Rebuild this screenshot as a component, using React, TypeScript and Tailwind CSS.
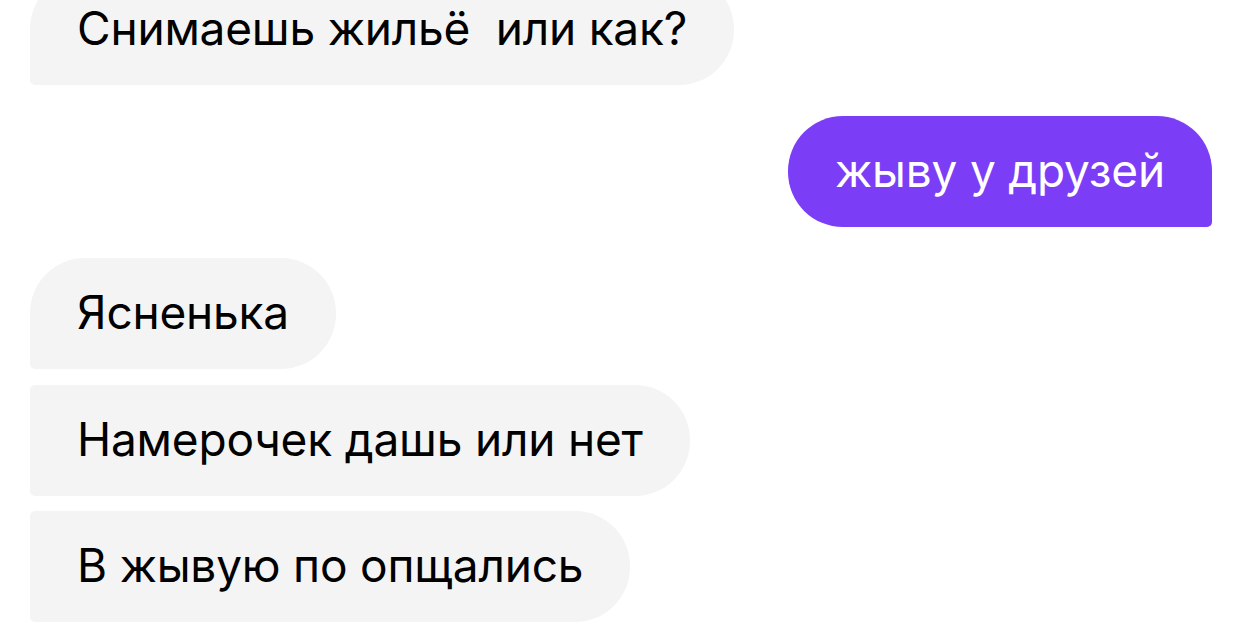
const font = { fontFamily: 'Inter, "Noto Sans", sans-serif' };

type Msg = {
  text: string;
  mine?: boolean;
  corners: string;
  gap: string;
};

const messages: Msg[] = [
  { text: 'Снимаешь жильё  или как?', corners: 'rounded-[55px] rounded-bl-[5px]', gap: '-mt-[26px]' },
  { text: 'жыву у друзей', mine: true, corners: 'rounded-[55px] rounded-br-[5px]', gap: 'mt-[31px]' },
  { text: 'Ясненька', corners: 'rounded-[55px] rounded-bl-[5px]', gap: 'mt-[31px]' },
  { text: 'Намерочек дашь или нет', corners: 'rounded-r-[55px] rounded-l-[5px]', gap: 'mt-[16px]' },
  { text: 'В жывую по опщались', corners: 'rounded-r-[55px] rounded-l-[5px]', gap: 'mt-[15px]' },
];

export default function App() {
  return (
    <div className="w-[1242px] h-[635px] overflow-hidden bg-white" style={font}>
      <div className="flex flex-col px-[30px]">
        {messages.map((m, i) => (
          <div
            key={i}
            className={`${m.gap} flex ${m.mine ? 'justify-end' : 'justify-start'}`}
          >
            <div
              className={`${m.corners} h-[111px] flex items-center px-[47px] pb-[2px] text-[46px] whitespace-pre tracking-[-0.2px] ${
                m.mine ? 'bg-[#7b3df6] text-white' : 'bg-[#f4f4f4] text-black'
              }`}
            >
              {m.text}
            </div>
          </div>
        ))}
      </div>
    </div>
  );
}
